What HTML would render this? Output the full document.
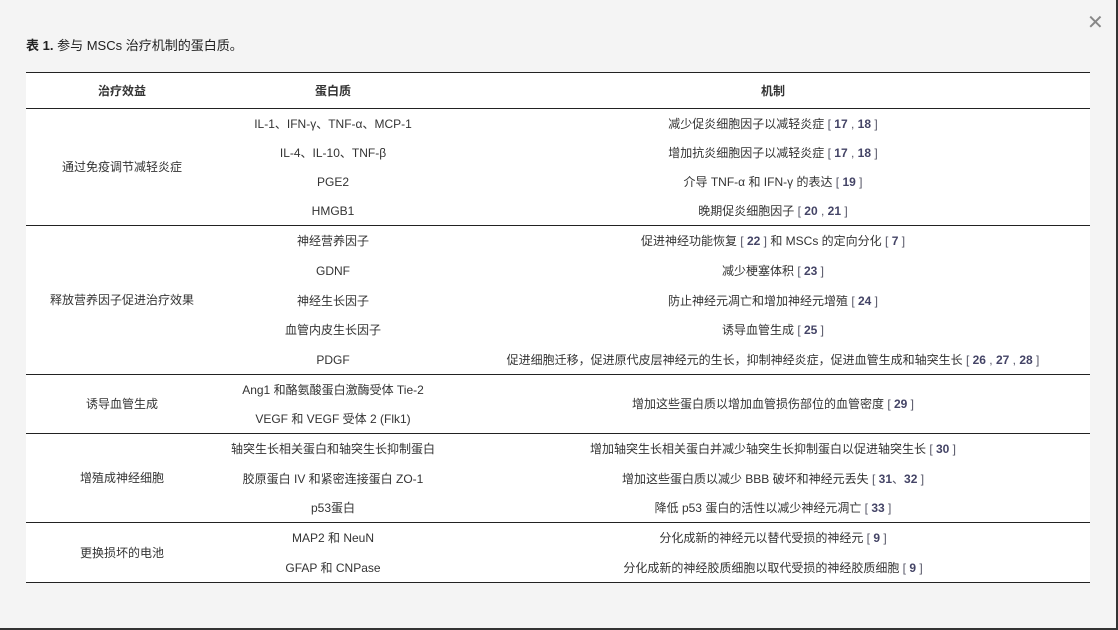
<!DOCTYPE html>
<html><head><meta charset="utf-8"><style>
body{margin:0;background:#f4f4f4;font-family:"Liberation Sans","Noto Sans CJK SC",sans-serif;color:#222;}
.frame{position:absolute;left:0;top:0;width:1116px;height:628px;border-right:2px solid #333;border-bottom:2px solid #333;}
.close{position:absolute;left:1087px;top:10px;font-size:20px;color:#888;}
.title{position:absolute;left:26px;top:35px;font-size:13px;}
table{position:absolute;left:26px;top:72px;width:1064px;border-collapse:collapse;background:#fff;font-size:12px;table-layout:fixed;}
td,th{text-align:center;padding:0;height:29px;line-height:14px;color:#333;}
tr.t td{height:30px;}
td.m{padding-left:8px;}
th{height:35px;font-weight:bold;border-bottom:1.5px solid #222;}
table{border-top:1.5px solid #222;border-bottom:1.5px solid #222;}
tr.g td{border-top:1.5px solid #222;}
.r{color:#556;}
.r b{color:#446;}
</style></head><body>
<div class="frame"></div>
<div class="close">✕</div>
<div class="title"><b>表 1.</b> 参与 MSCs 治疗机制的蛋白质。</div>
<table>
<colgroup><col style="width:192px"><col style="width:230px"><col></colgroup>
<tr><th>治疗效益</th><th>蛋白质</th><th style="padding-left:8px">机制</th></tr>
<tr><td rowspan="4">通过免疫调节减轻炎症</td><td>IL-1、IFN-γ、TNF-α、MCP-1</td><td class="m">减少促炎细胞因子以减轻炎症 <span class="r">[ <b>17</b> , <b>18</b> ]</span></td></tr>
<tr><td>IL-4、IL-10、TNF-β</td><td class="m">增加抗炎细胞因子以减轻炎症 <span class="r">[ <b>17</b> , <b>18</b> ]</span></td></tr>
<tr><td>PGE2</td><td class="m">介导 TNF-α 和 IFN-γ 的表达 <span class="r">[ <b>19</b> ]</span></td></tr>
<tr><td>HMGB1</td><td class="m">晚期促炎细胞因子 <span class="r">[ <b>20</b> , <b>21</b> ]</span></td></tr>
<tr class="g t"><td rowspan="5">释放营养因子促进治疗效果</td><td>神经营养因子</td><td class="m">促进神经功能恢复 <span class="r">[ <b>22</b> ]</span> 和 MSCs 的定向分化 <span class="r">[ <b>7</b> ]</span></td></tr>
<tr class="t"><td>GDNF</td><td class="m">减少梗塞体积 <span class="r">[ <b>23</b> ]</span></td></tr>
<tr><td>神经生长因子</td><td class="m">防止神经元凋亡和增加神经元增殖 <span class="r">[ <b>24</b> ]</span></td></tr>
<tr class="t"><td>血管内皮生长因子</td><td class="m">诱导血管生成 <span class="r">[ <b>25</b> ]</span></td></tr>
<tr><td>PDGF</td><td class="m">促进细胞迁移，促进原代皮层神经元的生长，抑制神经炎症，促进血管生成和轴突生长 <span class="r">[ <b>26</b> , <b>27</b> , <b>28</b> ]</span></td></tr>
<tr class="g"><td rowspan="2">诱导血管生成</td><td>Ang1 和酪氨酸蛋白激酶受体 Tie-2</td><td class="m" rowspan="2">增加这些蛋白质以增加血管损伤部位的血管密度 <span class="r">[ <b>29</b> ]</span></td></tr>
<tr><td>VEGF 和 VEGF 受体 2 (Flk1)</td></tr>
<tr class="g t"><td rowspan="3">增殖成神经细胞</td><td>轴突生长相关蛋白和轴突生长抑制蛋白</td><td class="m">增加轴突生长相关蛋白并减少轴突生长抑制蛋白以促进轴突生长 <span class="r">[ <b>30</b> ]</span></td></tr>
<tr><td>胶原蛋白 IV 和紧密连接蛋白 ZO-1</td><td class="m">增加这些蛋白质以减少 BBB 破坏和神经元丢失 <span class="r">[ <b>31</b>、<b>32</b> ]</span></td></tr>
<tr><td>p53蛋白</td><td class="m">降低 p53 蛋白的活性以减少神经元凋亡 <span class="r">[ <b>33</b> ]</span></td></tr>
<tr class="g t"><td rowspan="2">更换损坏的电池</td><td>MAP2 和 NeuN</td><td class="m">分化成新的神经元以替代受损的神经元 <span class="r">[ <b>9</b> ]</span></td></tr>
<tr><td>GFAP 和 CNPase</td><td class="m">分化成新的神经胶质细胞以取代受损的神经胶质细胞 <span class="r">[ <b>9</b> ]</span></td></tr>
</table>
</body></html>
